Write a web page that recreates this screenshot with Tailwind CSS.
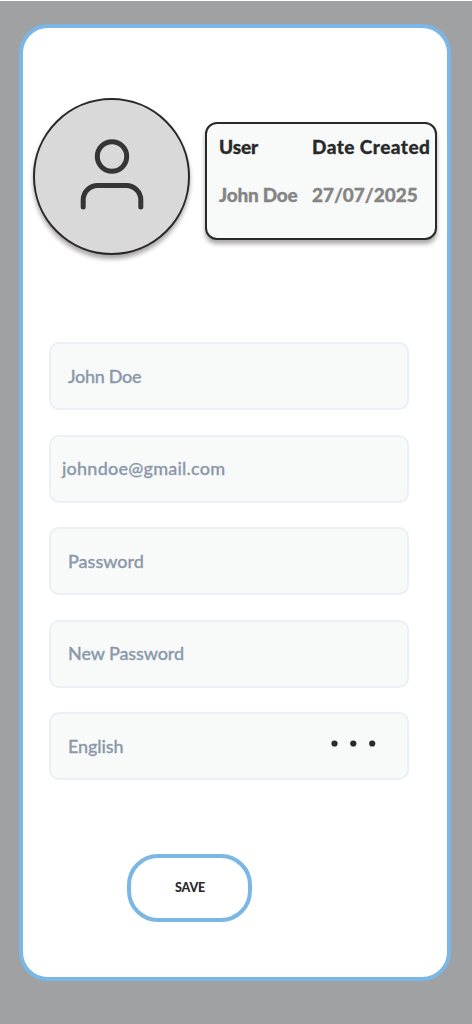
<!DOCTYPE html>
<html lang="en">
<head>
<meta charset="utf-8">
<title>User profile</title>
<script src="https://cdn.jsdelivr.net/npm/@tailwindcss/browser@4"></script>
</head>
<body class="h-[1024px] w-[472px] overflow-hidden border-t border-white bg-[#a0a1a3] pt-[23px] pl-[19px] font-['Lato',sans-serif]">
<main class="flex h-[957px] w-[432px] flex-col rounded-[29px] border-4 border-[#7ab6e6] bg-white">
  <section class="mt-[70px] ml-[10px] flex h-[157px] items-start">
    <div class="flex size-[157px] shrink-0 justify-center rounded-full border-2 border-[#292929] bg-[#d9d9d9] pt-[38px] shadow-[0_4px_4px_rgba(50,40,40,0.4)]">
      <svg class="h-[74px] w-[66px]" viewBox="0 0 66 74" fill="none" stroke="#353535" stroke-width="5" stroke-linecap="round">
        <circle cx="33" cy="18.5" r="14.7"/>
        <path d="M4.2 69V62A14.5 14.5 0 0 1 18.7 47.5H47.3A14.5 14.5 0 0 1 61.8 62V69"/>
      </svg>
    </div>
    <div class="mt-[24px] ml-[15px] grid h-[118px] w-[232px] shrink-0 grid-cols-[93px_1fr] content-start gap-y-6 rounded-xl border-2 border-[#292929] bg-[#f8faf9] pt-[11px] pl-[12px] text-[19px] leading-6 font-black whitespace-nowrap text-[#292929] shadow-[0_4px_4px_rgba(50,40,40,0.4)] [-webkit-text-stroke:0.3px]">
      <span class="tracking-[-0.1px]">User</span><span class="tracking-[0.45px]">Date Created</span>
      <span class="tracking-[-0.25px] text-[#858585]">John Doe</span><span class="tracking-[-0.05px] text-[#858585]">27/07/2025</span>
    </div>
  </section>
  <form class="mt-[87px] ml-[26px] flex w-[360px] flex-col gap-[24.5px] text-[18px] font-medium text-[#8b98aa] [-webkit-text-stroke:0.3px]">
    <div class="flex h-[68px] items-center rounded-[10px] border-2 border-[#ebeff6] bg-[#f8faf9] pl-[17px]"><span class="tracking-[-0.3px]">John Doe</span></div>
    <div class="flex h-[68px] items-center rounded-[10px] border-2 border-[#ebeff6] bg-[#f8faf9] pl-[11px]"><span class="tracking-[0.22px]">johndoe@gmail.com</span></div>
    <div class="flex h-[68px] items-center rounded-[10px] border-2 border-[#ebeff6] bg-[#f8faf9] pl-[17px]"><span class="tracking-[0px]">Password</span></div>
    <div class="flex h-[68px] items-center rounded-[10px] border-2 border-[#ebeff6] bg-[#f8faf9] pl-[17px]"><span class="tracking-[-0.1px]">New Password</span></div>
    <div class="flex h-[68px] items-center justify-between rounded-[10px] border-2 border-[#ebeff6] bg-[#f8faf9] pr-[31px] pl-[17px]"><span class="tracking-[-0.1px]">English</span>
      <svg class="mb-[5px] h-[7px] w-[45px]" viewBox="0 0 45 7" fill="#292929"><circle cx="3.5" cy="3.5" r="3.1"/><circle cx="22.3" cy="3.5" r="3.1"/><circle cx="41.2" cy="3.5" r="3.1"/></svg>
    </div>
  </form>
  <button type="button" class="mt-[74px] ml-[104px] h-[68px] w-[125px] rounded-[31px] border-4 border-[#7ab6e6] bg-white pt-px pl-px text-[12.5px] font-black tracking-[-0.15px] text-[#292929]">SAVE</button>
</main>
</body>
</html>
